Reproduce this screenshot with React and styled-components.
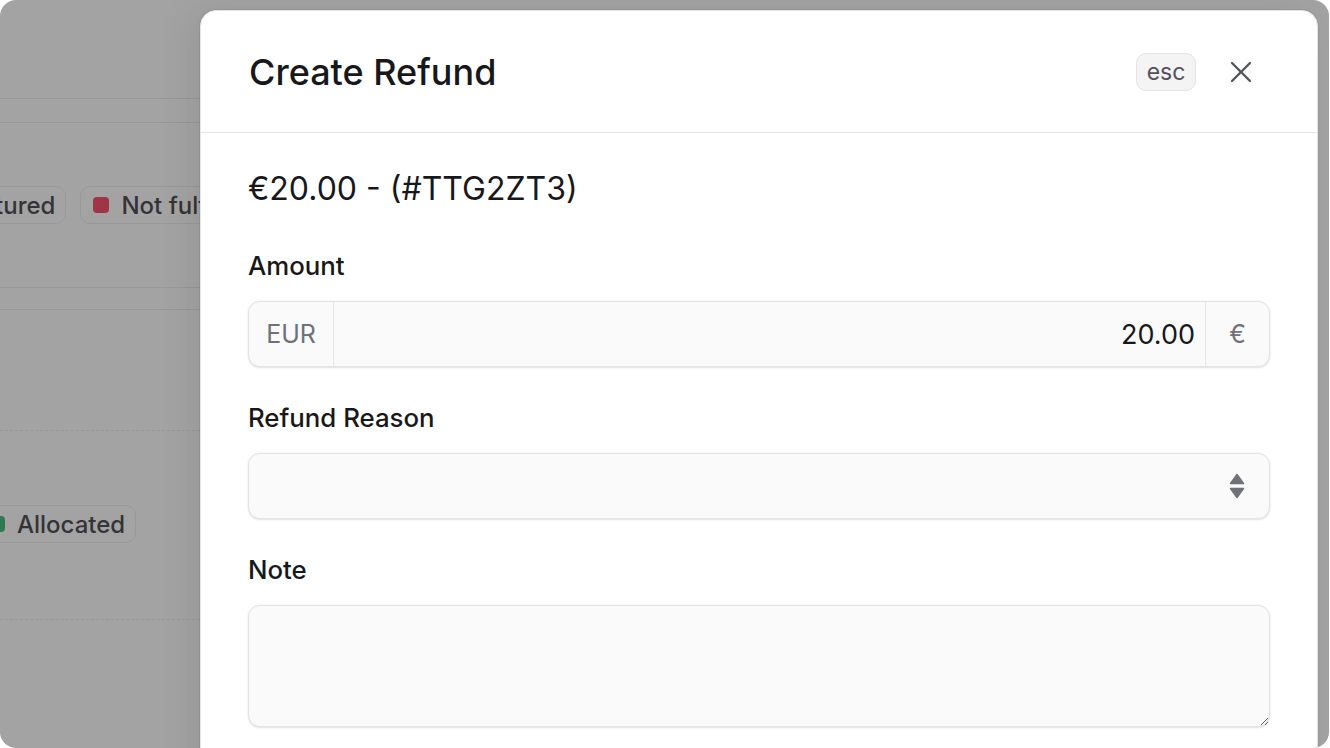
import React from 'react';
import styled, { createGlobalStyle } from 'styled-components';
import { X } from 'lucide-react';

const GlobalStyle = createGlobalStyle`
    html, body {
        margin: 0;
        padding: 0;
        background: #ffffff;
        font-family: Inter, "Noto Sans", sans-serif;
    }
    * {
        box-sizing: border-box;
    }
`;

const Frame = styled.div`
    position: relative;
    width: 1329px;
    height: 748px;
    border-radius: 16px;
    overflow: hidden;
    background: #a3a3a3;
`;

const Backdrop = styled.div`
    display: flex;
    flex-direction: column;
    padding-top: 98px;
    width: 200px;
`;

const Rule = styled.div`
    margin-top: ${({ $gap }) => $gap || 0}px;
    border-top: 1px ${({ $dashed }) => ($dashed ? 'dashed' : 'solid')} #979797;
`;

const BadgeRow = styled.div`
    display: flex;
    gap: 14px;
    margin-top: ${({ $gap }) => $gap}px;
    margin-left: ${({ $shift }) => $shift}px;
`;

const Badge = styled.div`
    display: flex;
    align-items: center;
    gap: 12px;
    height: 38px;
    padding: 0 10px 0 12px;
    border: 1px solid #989898;
    border-radius: 10px;
    font-size: 24px;
    font-weight: 500;
    color: #343438;
    white-space: nowrap;
`;

const Dot = styled.span`
    width: 16px;
    height: 16px;
    border-radius: 4px;
    background: ${({ $color }) => $color};
`;

const Modal = styled.div`
    position: absolute;
    left: 200px;
    top: 10px;
    width: 1118px;
    height: 780px;
    background: #ffffff;
    border: 1px solid #e4e4e7;
    border-radius: 16px;
    box-shadow: 0 0 0 1px rgba(0, 0, 0, 0.06), -10px 0 36px rgba(0, 0, 0, 0.07);
    display: flex;
    flex-direction: column;
`;

const Header = styled.div`
    display: flex;
    align-items: center;
    height: 122px;
    padding: 0 58px 0 48px;
    border-bottom: 1px solid #e4e4e7;
`;

const Title = styled.h2`
    flex: 1;
    margin: 0;
    font-size: 36px;
    font-weight: 500;
    color: #18181b;
`;

const Kbd = styled.kbd`
    display: flex;
    align-items: center;
    justify-content: center;
    width: 60px;
    height: 38px;
    border: 1px solid #e4e4e7;
    border-radius: 10px;
    background: #f4f4f5;
    font-family: Inter, sans-serif;
    font-size: 23px;
    color: #52525b;
`;

const CloseButton = styled.button`
    display: flex;
    align-items: center;
    justify-content: center;
    margin-left: 27px;
    padding: 0;
    border: none;
    background: none;
    color: #52525b;
`;

const Body = styled.div`
    display: flex;
    flex-direction: column;
    padding: 36px 47px 0;
`;

const Summary = styled.div`
    font-size: 32px;
    line-height: 40px;
    color: #18181b;
`;

const Field = styled.div`
    display: flex;
    flex-direction: column;
    gap: 19px;
    margin-top: ${({ $gap }) => $gap}px;
`;

const Label = styled.label`
    font-size: 25.8px;
    line-height: 32px;
    font-weight: 500;
    color: #18181b;
`;

const controlBox = `
    border: 1px solid #e4e4e7;
    border-radius: 12px;
    background: #fafafa;
    box-shadow: 0 1px 2px rgba(0, 0, 0, 0.1), 0 0 0 1px rgba(0, 0, 0, 0.02);
`;

const InputGroup = styled.div`
    ${controlBox}
    display: flex;
    height: 66px;
`;

const Affix = styled.div`
    display: flex;
    align-items: center;
    justify-content: center;
    width: ${({ $width }) => $width}px;
    font-size: 25px;
    color: #71717a;
    border-${({ $side }) => $side}: 1px solid #e4e4e7;
`;

const AmountInput = styled.input`
    flex: 1;
    min-width: 0;
    padding: 0 10px 0 16px;
    border: none;
    background: transparent;
    font-family: Inter, sans-serif;
    font-size: 27px;
    color: #18181b;
    text-align: right;
    outline: none;
`;

const SelectTrigger = styled.button`
    ${controlBox}
    display: flex;
    align-items: center;
    justify-content: flex-end;
    height: 66px;
    padding: 0 24px;
    color: #71717a;
`;

const NoteArea = styled.textarea`
    ${controlBox}
    height: 122px;
    resize: vertical;
    padding: 14px 16px;
    font-family: Inter, sans-serif;
    font-size: 25px;
    outline: none;
`;

const Chevrons = () => (
    <svg width="16" height="26" viewBox="0 0 16 26" fill="currentColor">
        <path d="M8 1.5 L14.5 10.5 H1.5 Z" strokeLinejoin="round" stroke="currentColor" strokeWidth="1.5" />
        <path d="M1.5 15.5 H14.5 L8 24.5 Z" strokeLinejoin="round" stroke="currentColor" strokeWidth="1.5" />
    </svg>
);

export default function App() {
    return (
        <>
            <GlobalStyle />
            <Frame>
                <Backdrop>
                    <Rule />
                    <Rule $gap={23} />
                    <BadgeRow $gap={63} $shift={-92}>
                        <Badge><Dot $color="#2f7a55" />Captured</Badge>
                        <Badge><Dot $color="#9e3646" />Not fulfilled</Badge>
                    </BadgeRow>
                    <Rule $gap={63} />
                    <Rule $gap={21} />
                    <Rule $gap={120} $dashed />
                    <BadgeRow $gap={74} $shift={-24}>
                        <Badge><Dot $color="#2f7a55" />Allocated</Badge>
                    </BadgeRow>
                    <Rule $gap={76} $dashed />
                </Backdrop>
                <Modal>
                    <Header>
                        <Title>Create Refund</Title>
                        <Kbd>esc</Kbd>
                        <CloseButton aria-label="Close">
                            <X size={36} strokeWidth={1.5} />
                        </CloseButton>
                    </Header>
                    <Body>
                        <Summary>€20.00 - (#TTG2ZT3)</Summary>
                        <Field $gap={41}>
                            <Label>Amount</Label>
                            <InputGroup>
                                <Affix $width={85} $side="right">EUR</Affix>
                                <AmountInput defaultValue="20.00" />
                                <Affix $width={64} $side="left">€</Affix>
                            </InputGroup>
                        </Field>
                        <Field $gap={35}>
                            <Label>Refund Reason</Label>
                            <SelectTrigger>
                                <Chevrons />
                            </SelectTrigger>
                        </Field>
                        <Field $gap={35}>
                            <Label>Note</Label>
                            <NoteArea />
                        </Field>
                    </Body>
                </Modal>
            </Frame>
        </>
    );
}
